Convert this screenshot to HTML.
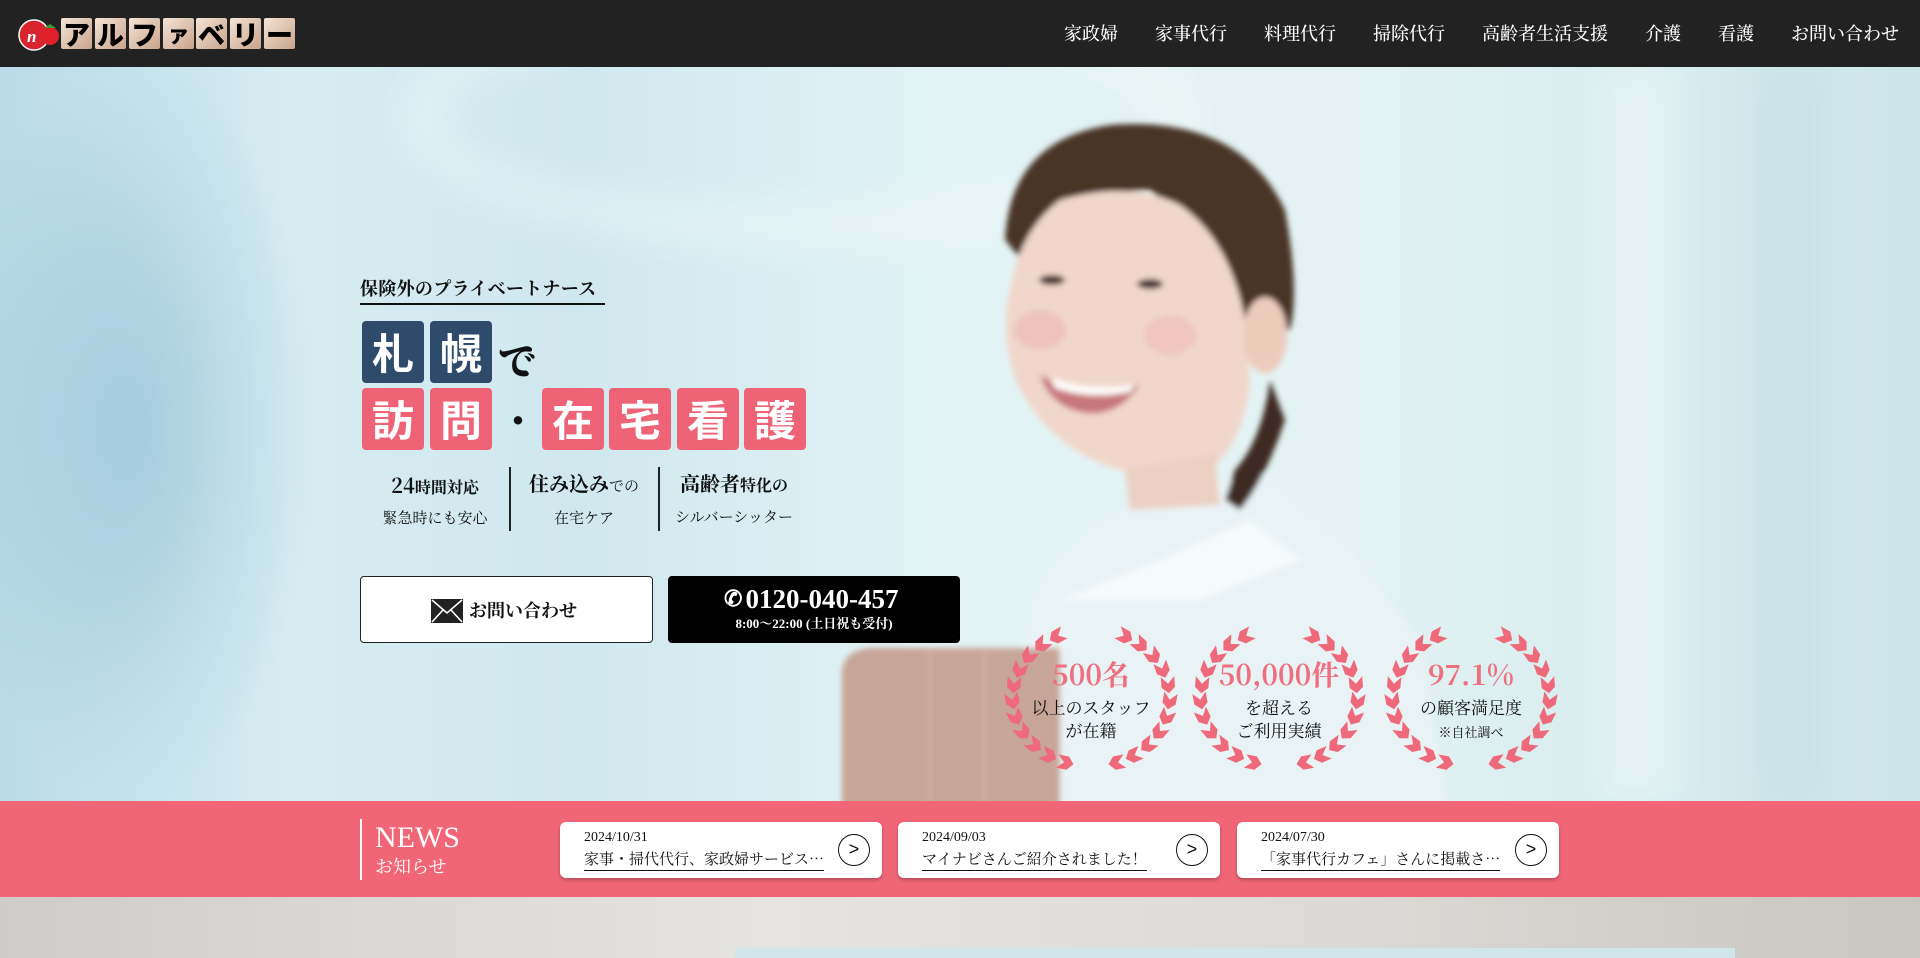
<!DOCTYPE html>
<html><head><meta charset="utf-8">
<style>
*{margin:0;padding:0;box-sizing:border-box}
body{width:1920px;height:958px;overflow:hidden;position:relative;font-family:"Liberation Serif","Noto Serif CJK SC",serif;background:#d9d7d3}
.abs{position:absolute}
header{position:absolute;left:0;top:0;width:1920px;height:67px;background:#222}
.tile{position:absolute;top:18px;width:31px;height:31px;border-radius:2px;background:linear-gradient(135deg,#f3e3d6,#c9a48b);font:900 27px/31px "Noto Sans CJK JP",sans-serif;color:#000;text-align:center}
nav{position:absolute;right:21px;top:20px;display:flex;gap:0}
nav span{color:#fff;font:500 18px/26px "Noto Serif CJK SC",serif;margin-left:37px}
#hero{position:absolute;left:0;top:67px;width:1920px;height:734px;overflow:hidden;
background:linear-gradient(90deg,#b9dbe7 0%,#d6ecf1 15%,#cfe8ee 30%,#e3f3f5 50%,#e4f2f3 70%,#d7ecee 85%,#cde6ea 100%)}
.sq{position:absolute;width:62px;height:62px;border-radius:4px;color:#fff;font:700 42px/62px "Noto Sans CJK JP",sans-serif;text-align:center}
.nv{background:#2e4b6c}.pk{background:#ee6476}
.feat{position:absolute;top:402px;height:62px;text-align:center;color:#111;font-family:"Noto Serif CJK SC",serif}
.btn{position:absolute;top:509px;height:67px;border-radius:4px}
.laurel{position:absolute;width:180px;height:150px;text-align:center;font-family:"Noto Serif CJK SC",serif;color:#111}
.laurel svg{position:absolute;left:0;top:0}
.laurel .n{position:absolute;left:0;right:0;top:32px;font:700 28px/36px "Noto Serif CJK SC",serif;color:#ef6f7e}
.laurel .t{position:absolute;left:0;right:0;top:71px;font-size:17px;line-height:23px}
#news{position:absolute;left:0;top:801px;width:1920px;height:96px;background:#f06677}
.card{position:absolute;top:21px;width:322px;height:56px;background:#fff;border-radius:6px;box-shadow:0 2px 3px rgba(0,0,0,.25)}
.card .d{position:absolute;left:24px;top:7px;font:14px/18px "Liberation Serif",serif;color:#111}
.card .ti{position:absolute;left:24px;top:26px;font:15px/22px "Noto Serif CJK SC",serif;color:#111;border-bottom:1.5px solid #111;white-space:nowrap}
.card .ar{position:absolute;right:12px;top:12px;width:32px;height:32px;border:1.5px solid #111;border-radius:50%;text-align:center;font:18px/28px "Liberation Sans",sans-serif;color:#111}
</style></head><body>
<header>
 <svg class="abs" style="left:18px;top:18px" width="42" height="34" viewBox="0 0 42 34">
  <circle cx="16" cy="17" r="15" fill="#d9232e" stroke="#fff" stroke-width="1.5"/>
  <text x="9" y="24" font-size="17" font-style="italic" font-weight="700" fill="#fff" font-family="Liberation Serif">n</text>
  <circle cx="32" cy="18" r="9" fill="#e0202b"/>
  <path d="M26 10 L32 6 L38 10 Z" fill="#3a9a3a"/>
 </svg>
 <div class="tile" style="left:61px">ア</div>
 <div class="tile" style="left:95px">ル</div>
 <div class="tile" style="left:129px">フ</div>
 <div class="tile" style="left:163px;font-size:22px">ァ</div>
 <div class="tile" style="left:196px">ベ</div>
 <div class="tile" style="left:230px">リ</div>
 <div class="tile" style="left:264px">ー</div>
 <nav><span>家政婦</span><span>家事代行</span><span>料理代行</span><span>掃除代行</span><span>高齢者生活支援</span><span>介護</span><span>看護</span><span>お問い合わせ</span></nav>
</header>

<div id="hero">
 <div class="abs" style="left:-60px;top:-20px;width:380px;height:760px;background:radial-gradient(ellipse at center,rgba(150,195,215,.7),rgba(190,222,232,0) 70%)"></div>
 <div class="abs" style="left:400px;top:-80px;width:800px;height:260px;border-radius:50%;border:40px solid rgba(255,255,255,.35);filter:blur(20px)"></div>
 <div class="abs" style="left:1600px;top:0;width:80px;height:734px;background:rgba(255,255,255,.35);filter:blur(18px)"></div>
 <div class="abs" style="left:1760px;top:0;width:60px;height:734px;background:rgba(190,220,226,.5);filter:blur(16px)"></div>
 <svg class="abs" style="left:0;top:-67px" width="1920" height="801" viewBox="0 0 1920 801">
  <defs><filter id="b"><feGaussianBlur stdDeviation="3"/></filter></defs>
  <g filter="url(#b)">
  <path d="M1005 820 L1030 600 Q1060 540 1130 505 L1200 490 L1260 470 Q1320 520 1360 560 L1420 640 L1450 820 Z" fill="#e9f3f6"/>
  <path d="M1060 600 L1160 560 L1250 520 L1300 560 L1200 600 Z" fill="#f5fafb"/>
  <path d="M1005 240 Q1010 140 1110 125 Q1240 115 1285 210 Q1300 290 1290 330 L1240 330 Q1215 240 1150 190 Q1080 190 1030 270 Z" fill="#4a3528"/>
  <path d="M1270 380 Q1262 440 1235 470 L1225 500 L1240 510 Q1265 480 1285 420 Z" fill="#3e2c22"/>
  <path d="M1010 290 Q1020 230 1060 200 Q1130 180 1180 205 Q1230 240 1245 320 L1250 380 Q1245 440 1210 470 Q1170 480 1120 470 Q1050 450 1015 380 Q1000 330 1010 290 Z" fill="#f1d7cb"/>
  <path d="M1125 470 L1130 510 L1220 505 L1215 455 Z" fill="#ecd0c2"/>
  <ellipse cx="1265" cy="335" rx="22" ry="38" fill="#eccbbb"/>
  <ellipse cx="1040" cy="330" rx="26" ry="20" fill="#efb6b3" opacity=".6"/>
  <ellipse cx="1170" cy="335" rx="26" ry="20" fill="#efb6b3" opacity=".5"/>
  <path d="M1040 375 Q1080 395 1140 385 Q1115 420 1080 412 Q1050 405 1040 375 Z" fill="#c8777a"/>
  <path d="M1050 378 Q1090 392 1135 385 L1130 392 Q1090 400 1055 388 Z" fill="#fff"/>
  <ellipse cx="1052" cy="280" rx="13" ry="5" fill="#3a2b25"/>
  <ellipse cx="1150" cy="284" rx="13" ry="5" fill="#3a2b25"/>
  <path d="M842 900 L842 670 Q845 650 870 648 L1060 648 L1060 900 Z" fill="#c7a597"/>
  <path d="M930 650 L930 900 M985 650 L985 900" stroke="#d9bcb0" stroke-width="2"/>
  </g>
 </svg>

 <div class="abs" style="left:360px;top:206px;font:700 18px/30px 'Noto Serif CJK SC',serif;color:#111;border-bottom:2.5px solid #111;width:245px;letter-spacing:0.3px">保険外のプライベートナース</div>
 <div class="sq nv" style="left:362px;top:254px">札</div>
 <div class="sq nv" style="left:430px;top:254px">幌</div>
 <div class="abs" style="left:498px;top:262px;font:900 38px/60px 'Noto Serif CJK SC',serif;color:#111">で</div>
 <div class="sq pk" style="left:362px;top:321px">訪</div>
 <div class="sq pk" style="left:430px;top:321px">問</div>
 <div class="abs" style="left:503px;top:327px;font:900 30px/50px 'Noto Sans CJK JP',sans-serif;color:#111">・</div>
 <div class="sq pk" style="left:542px;top:321px">在</div>
 <div class="sq pk" style="left:609px;top:321px">宅</div>
 <div class="sq pk" style="left:677px;top:321px">看</div>
 <div class="sq pk" style="left:744px;top:321px">護</div>

 <div class="feat" style="left:362px;width:146px"><div style="font-size:20px;line-height:26px;margin-top:3px;font-weight:700">24<span style="font-size:16px">時間対応</span></div><div style="font-size:15px;line-height:26px;margin-top:5px">緊急時にも安心</div></div>
 <div class="abs" style="left:509px;top:400px;width:1.5px;height:64px;background:#222"></div>
 <div class="feat" style="left:510px;width:148px"><div style="font-size:20px;line-height:26px;margin-top:1px;font-weight:700">住み込み<span style="font-size:15px;font-weight:400">での</span></div><div style="font-size:15px;line-height:26px;margin-top:6px">在宅ケア</div></div>
 <div class="abs" style="left:658px;top:400px;width:1.5px;height:64px;background:#222"></div>
 <div class="feat" style="left:659px;width:150px"><div style="font-size:20px;line-height:26px;margin-top:1px;font-weight:700">高齢者<span style="font-size:16px">特化の</span></div><div style="font-size:15px;line-height:26px;margin-top:6px">シルバーシッター</div></div>

 <div class="btn" style="left:360px;width:293px;background:#fff;border:1.5px solid #222">
  <svg class="abs" style="left:70px;top:22px" width="32" height="24" viewBox="0 0 32 24"><rect width="32" height="24" fill="#222"/><path d="M1 1 L16 14 L31 1 M1 23 L12 11 M31 23 L20 11" stroke="#fff" stroke-width="1.6" fill="none"/></svg>
  <div class="abs" style="left:108px;top:18px;font:700 18px/30px 'Noto Serif CJK SC',serif;color:#111">お問い合わせ</div>
 </div>
 <div class="btn" style="left:668px;width:292px;background:#000;color:#fff;text-align:center">
  <div style="margin-top:7px;font:700 27px/32px 'Liberation Serif',serif;padding-left:16px;position:relative"><span style="position:absolute;left:56px;top:0;font-size:22px">✆</span>0120-040-457</div>
  <div style="font:700 13px/18px 'Liberation Serif','Noto Serif CJK SC',serif;margin-top:0">8:00〜22:00 (土日祝も受付)</div>
 </div>

 <div class="laurel" style="left:1001px;top:557px"><svg width="180" height="150"></svg><div class="n">500名</div><div class="t">以上のスタッフ<br>が在籍</div></div>
 <div class="laurel" style="left:1189px;top:557px"><svg width="180" height="150"></svg><div class="n">50,000件</div><div class="t">を超える<br>ご利用実績</div></div>
 <div class="laurel" style="left:1381px;top:557px"><svg width="180" height="150"></svg><div class="n">97.1%</div><div class="t">の顧客満足度<br><span style="font-size:13px">※自社調べ</span></div></div>
</div>

<div id="news">
 <div class="abs" style="left:360px;top:18px;width:2px;height:61px;background:#fff"></div>
 <div class="abs" style="left:375px;top:20px;font:30px/34px 'Liberation Serif',serif;color:#fff">NEWS</div>
 <div class="abs" style="left:375px;top:53px;font:18px/24px 'Noto Serif CJK SC',serif;color:#fff">お知らせ</div>
 <div class="card" style="left:560px"><div class="d">2024/10/31</div><div class="ti">家事・掃代代行、家政婦サービス…</div><div class="ar">&gt;</div></div>
 <div class="card" style="left:898px"><div class="d">2024/09/03</div><div class="ti">マイナビさんご紹介されました！</div><div class="ar">&gt;</div></div>
 <div class="card" style="left:1237px"><div class="d">2024/07/30</div><div class="ti">「家事代行カフェ」さんに掲載さ…</div><div class="ar">&gt;</div></div>
</div>
<div class="abs" style="left:0;top:897px;width:1920px;height:61px;background:linear-gradient(90deg,#cfcdc9,#e6e4e1 40%,#dcdad6 70%,#c9c5c0)"></div>
<div class="abs" style="left:735px;top:948px;width:1000px;height:10px;background:#cfe6ea"></div>

<script>
document.querySelectorAll('.laurel svg').forEach(function(s){
 var cx=90,cy=74,rx=78,ry=68,h='';
 [1,-1].forEach(function(side){
  for(var i=0;i<11;i++){
   var th=(32+i*13.5)*Math.PI/180;
   var px=cx+side*rx*Math.sin(th), py=cy-ry*Math.cos(th);
   var dx=-side*rx*Math.cos(th), dy=-ry*Math.sin(th);
   var rot=Math.atan2(dy,dx)*180/Math.PI;
   h+='<g transform="translate('+px.toFixed(1)+','+py.toFixed(1)+') rotate('+rot.toFixed(1)+')">'+
     '<path d="M0 0 L8 -4 L18 0 L8 4 Z" transform="rotate(-22)" fill="#ee6a7a"/>'+
     '<path d="M0 0 L8 -4 L18 0 L8 4 Z" transform="rotate(22)" fill="#ee6a7a"/></g>';
  }
 });
 s.innerHTML=h;
});
</script>
</body></html>
